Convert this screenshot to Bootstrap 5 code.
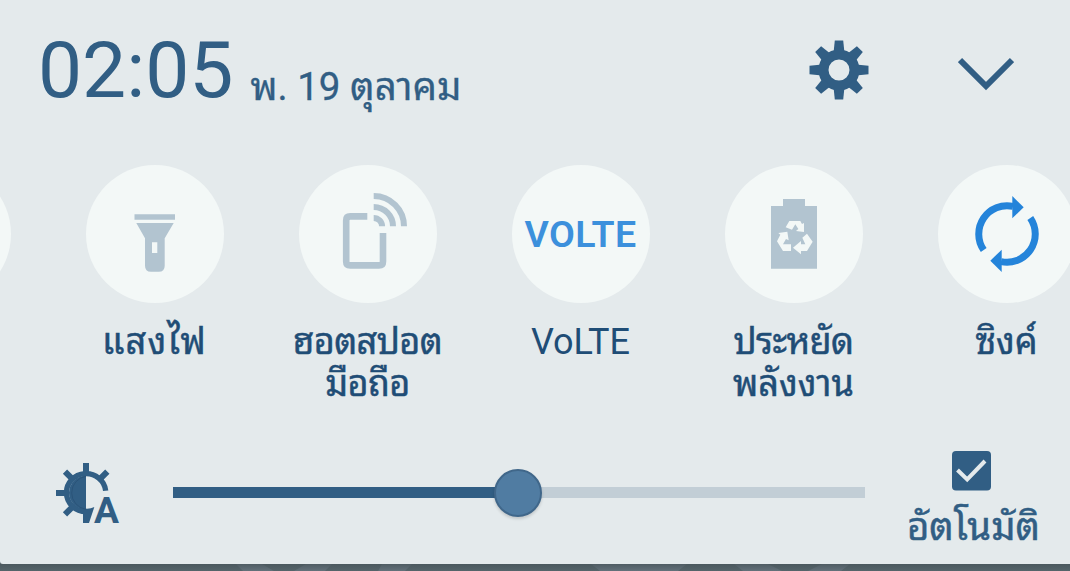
<!DOCTYPE html>
<html lang="th">
<head>
  <meta charset="UTF-8" />
  <meta name="viewport" content="width=device-width, initial-scale=1.0"/>
  <title>Quick settings</title>
  <link href="https://cdn.jsdelivr.net/npm/bootstrap@5.3.0/dist/css/bootstrap.min.css" rel="stylesheet" />
  <style>
    body {
      height: 571px;
      background-color: #55646a;
      font-family: Roboto, "Noto Sans Thai Looped", "Droid Sans Thai", Loma, Waree, Garuda, "Noto Sans", sans-serif;
      color: #315e84;
    }
    .shade {
      height: 564px;
      background-color: #e4eaec;
      border-radius: 0 0 0 3px;
    }
    .shade-head { height: 165px; padding: 29px 56px 0 38px; }
    .clock { font-size: 78.500px; line-height: 82px; }
    .date { font-size: 38.500px; line-height: 50px; margin: 17px 0 0 17px; -webkit-text-stroke: .3px; }
    .head-icons { gap: 89px; padding-top: 11px; }
    .tiles { height: 270px; margin-left: -165px; width: 1278px; }
    .tile { width: 213px; color: #1f4d76; }
    .tile-disc {
      width: 138px;
      height: 138px;
      background-color: #f3f8f7;
      color: #b2c4d0;
    }
    .tile-disc.on { color: #2484da; }
    .volte { font-size: 37.500px; font-weight: 600; color: #3c90dc; letter-spacing: .4px; }
    .tile-label { font-size: 36px; line-height: 42px; margin-top: 18px; }
    .thai { -webkit-text-stroke: .5px; }
    .snug { letter-spacing: -.6px; }
    .wide { letter-spacing: 1.200px; }
    .bright-row { height: 129px; padding: 16px 30px 0 55px; }
    .sun { margin-top: 11px; overflow: visible; }
    .sun text { font-size: 112px; font-weight: 700; }
    .track { width: 692px; height: 11px; margin: 36px 0 0 53px; background-color: #c2ced6; }
    .track-fill { height: 11px; background-color: #315e84; }
    .knob {
      width: 48px;
      height: 48px;
      top: 50%;
      margin-left: -1px;
      background-color: #507ca2;
      border: 2px solid #40678a;
      box-shadow: 0 2px 3px rgba(0,0,0,0.15);
    }
    .auto-label { font-size: 38.300px; line-height: 50px; margin-top: 11px; }
  </style>
</head>

<body class="overflow-hidden">
  <div class="shade overflow-hidden">

    <!-- Clock and date -->
    <div class="shade-head d-flex justify-content-between align-items-start">
      <div class="d-flex align-items-start text-nowrap">
        <div class="clock">02:05</div>
        <div class="date pt-3">พ. 19 ตุลาคม</div>
      </div>
      <div class="head-icons d-flex">
        <svg width="60" height="60" viewBox="-30 -30 60 60" fill="currentColor">
          <circle r="15.500" fill="none" stroke="currentColor" stroke-width="10"/>
          <g id="teeth">
            <path id="tooth" d="M-5.500 -17 L-4.200 -29.500 H4.200 L5.500 -17Z"/>
            <use href="#tooth" transform="rotate(45)"/>
            <use href="#tooth" transform="rotate(90)"/>
            <use href="#tooth" transform="rotate(135)"/>
          </g>
          <use href="#teeth" transform="rotate(180)"/>
        </svg>
        <svg width="56" height="60" viewBox="0 0 56 60" fill="none" stroke="currentColor" stroke-width="6">
          <path d="M2 20 L28 46 L54 20"/>
        </svg>
      </div>
    </div>

    <!-- Toggles -->
    <div class="tiles d-flex">
      <div class="tile d-flex flex-column align-items-center">
        <div class="tile-disc rounded-circle"></div>
      </div>
      <div class="tile d-flex flex-column align-items-center">
        <div class="tile-disc rounded-circle">
          <svg width="138" height="138" fill="currentColor">
            <path d="M48.500 49.200H89V54.700H48.500Z"/>
            <path fill-rule="evenodd" d="M50.300 58H87.700L78.700 73.300V100.700Q78.700 106.700 72.700 106.700H65Q59 106.700 59 100.700V73.300ZM66 77.300V88H71.300V77.300Z"/>
          </svg>
        </div>
        <div class="tile-label thai wide text-center text-nowrap">แสงไฟ</div>
      </div>
      <div class="tile d-flex flex-column align-items-center">
        <div class="tile-disc rounded-circle">
          <svg width="138" height="138" fill="none" stroke="currentColor" stroke-width="6.600">
            <path d="M68.300 51.400H51.200Q47.200 51.400 47.200 55.400V96.400Q47.200 100.400 51.200 100.400H80Q84 100.400 84 96.400V68"/>
            <path stroke-width="6" d="M74.700 31A30.300 30.300 0 0 1 105 61.300M74.700 42A19.300 19.300 0 0 1 94 61.300M74.700 52.900A8.400 8.400 0 0 1 83.100 61.300"/>
          </svg>
        </div>
        <div class="tile-label thai snug text-center text-nowrap">ฮอตสปอต<br>มือถือ</div>
      </div>
      <div class="tile d-flex flex-column align-items-center">
        <div class="tile-disc on rounded-circle d-flex align-items-center justify-content-center">
          <span class="volte">VOLTE</span>
        </div>
        <div class="tile-label text-center text-nowrap">VoLTE</div>
      </div>
      <div class="tile d-flex flex-column align-items-center">
        <div class="tile-disc rounded-circle">
          <svg width="138" height="138" fill="currentColor">
            <path d="M58 34H80V41H92V103.700H46V41H58Z"/>
            <g fill="#f3f8f7" transform="translate(-15 -10) scale(.3333)">
              <path d="M238 198H271L276 207L282 204V231L258 228L265 222L256 208L246 224L227 217Z"/>
              <path d="M205 234L232 230L236 256L228 252L219 268H243V288H219L201 259L211 239Z"/>
              <path d="M291 236L308 260L291 288H273V298L249 278L273 258V268H286L277 248Z"/>
            </g>
          </svg>
        </div>
        <div class="tile-label thai text-center text-nowrap"><span class="snug">ประหยัด</span><br>พลังงาน</div>
      </div>
      <div class="tile d-flex flex-column align-items-center">
        <div class="tile-disc on rounded-circle">
          <svg width="138" height="138" viewBox="0 0 138 138" fill="currentColor">
            <g id="arrow">
              <path d="M45.700 85A28.260 28.260 0 0 1 75 41.400" fill="none" stroke="currentColor" stroke-width="7"/>
              <path d="M74.300 31L85.700 42.300L74.300 53.300Z"/>
            </g>
            <use href="#arrow" transform="rotate(180 69 69)"/>
          </svg>
        </div>
        <div class="tile-label thai text-center text-nowrap">ซิงค์</div>
      </div>
    </div>

    <!-- Brightness -->
    <div class="bright-row d-flex align-items-start">
      <svg class="sun" width="65" height="64" viewBox="75 51 195 192" fill="currentColor">
        <path d="M227 137A59 57 0 1 0 168 200" fill="none" stroke="currentColor" stroke-width="16"/>
        <path d="M168 92A51 51 0 0 0 168 194Z"/>
        <path d="M168 54V84M78 144H108M105 80L126 101M232 80L211 101M105 208L126 187" stroke="currentColor" stroke-width="18"/>
        <path d="M159 190Q178 194 193 186L177 234H159Z"/>
        <path d="M168 94A50 50 0 0 0 168 193" fill="none" stroke="#274f73" stroke-width="2"/>
        <text x="192" y="234" textLength="75" lengthAdjust="spacingAndGlyphs">A</text>
      </svg>
      <div class="track position-relative">
        <div class="track-fill" style="width: 50%"></div>
        <div class="knob position-absolute start-50 translate-middle rounded-circle"></div>
      </div>
      <div class="ms-auto d-flex flex-column align-items-center">
        <svg class="me-1" width="39" height="40" viewBox="0 0 39 40">
          <rect width="39" height="39.500" rx="4" fill="#315e84"/>
          <path d="M5.500 19L15.200 28.500L33 10" fill="none" stroke="#e4eaec" stroke-width="4"/>
        </svg>
        <div class="auto-label thai text-nowrap">อัตโนมัติ</div>
      </div>
    </div>
  </div>

  <!-- Dimmed screen under the shade -->
  <svg class="d-block" width="1070" height="7" fill="#63717a">
    <defs>
      <linearGradient id="edge" x2="0" y2="1">
        <stop stop-color="#47545a" stop-opacity=".7"/>
        <stop offset="1" stop-color="#47545a" stop-opacity="0"/>
      </linearGradient>
    </defs>
    <path d="M236 0H262L274 7H243ZM306 0H332L325 7H294ZM382 0H412L405 7H378ZM591 0H687L678 7H600ZM734 0H768L782 7H743ZM822 0H850L841 7H808Z"/>
    <rect width="1070" height="7" fill="url(#edge)"/>
  </svg>

  <script src="https://cdn.jsdelivr.net/npm/bootstrap@5.3.0/dist/js/bootstrap.bundle.min.js"></script>
</body>
</html>
